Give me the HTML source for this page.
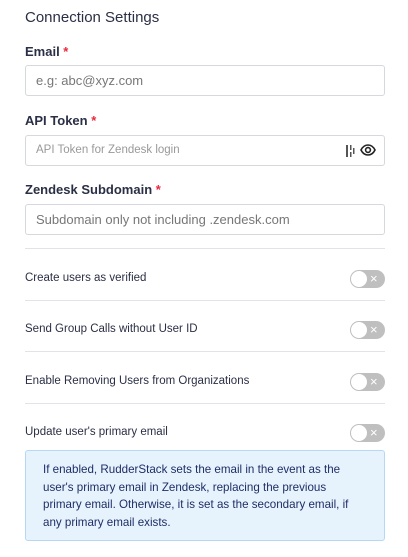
<!DOCTYPE html>
<html><head><style>
*{margin:0;padding:0;box-sizing:border-box}
body{width:408px;height:557px;background:#fff;font-family:"Liberation Sans",sans-serif;position:relative;overflow:hidden;color:#2b2f45}
.a{position:absolute}
.t{left:25px;top:9px;font-size:15px;font-weight:500;color:#2b2f45}
.l{left:25px;font-size:13px;font-weight:bold;color:#2b2f45}
.l span{color:#e8283d}
.in{left:25px;width:360px;height:31px;border:1px solid #d6d8de;border-radius:3px;font-size:13px;color:#777;padding-left:10px;line-height:29px}
.hr{left:25px;width:360px;height:1px;background:#e2e3e6}
.r{left:25px;font-size:11.5px;color:#2b2f45}
.tg{left:350px;width:35px;height:18px;border-radius:9px;background:#bfbfbf}
.tg:before{content:"";position:absolute;left:1px;top:1px;width:16px;height:16px;border-radius:50%;background:#fff}
.tg:after{content:"×";position:absolute;left:20px;top:0;font-size:13px;line-height:17px;color:#fff}
.box{left:25px;top:450px;width:360px;height:91px;background:#e6f3fd;border:1px solid #b7d7f7;border-radius:3px;padding:10px 16px 0 17px;font-size:11.6px;line-height:17.5px;color:#1f2d66}
</style></head><body>
<div class="a t">Connection Settings</div>
<div class="a l" style="top:44px">Email <span>*</span></div>
<div class="a in" style="top:65px">e.g: abc@xyz.com</div>
<div class="a l" style="top:113px">API Token <span>*</span></div>
<div class="a in" style="top:135px;font-size:11.5px;color:#999">API Token for Zendesk login
<svg class="a" style="left:318px;top:8px" width="14" height="14" viewBox="0 0 14 14"><rect x="2" y="1" width="2" height="12" fill="#555"/><rect x="6" y="1" width="1.5" height="5" fill="#555"/><rect x="6" y="8" width="1.5" height="5" fill="#555"/><rect x="9" y="4" width="1.5" height="6" fill="#555"/></svg>
<svg class="a" style="left:334px;top:7px" width="16" height="14" viewBox="0 0 16 14"><path d="M1 7C3 3 6 2 8 2s5 1 7 5c-2 4-5 5-7 5S3 11 1 7z" fill="none" stroke="#222" stroke-width="1.6"/><circle cx="8" cy="7" r="2.4" fill="none" stroke="#222" stroke-width="1.6"/></svg>
</div>
<div class="a l" style="top:182px">Zendesk Subdomain <span>*</span></div>
<div class="a in" style="top:204px">Subdomain only not including .zendesk.com</div>
<div class="a hr" style="top:248px"></div>
<div class="a r" style="top:272px">Create users as verified</div>
<div class="a tg" style="top:270px"></div>
<div class="a hr" style="top:300px"></div>
<div class="a r" style="top:323px">Send Group Calls without User ID</div>
<div class="a tg" style="top:321px"></div>
<div class="a hr" style="top:351px"></div>
<div class="a r" style="top:375px">Enable Removing Users from Organizations</div>
<div class="a tg" style="top:373px"></div>
<div class="a hr" style="top:403px"></div>
<div class="a r" style="top:426px">Update user's primary email</div>
<div class="a tg" style="top:424px"></div>
<div class="a box">If enabled, RudderStack sets the email in the event as the user's primary email in Zendesk, replacing the previous primary email. Otherwise, it is set as the secondary email, if any primary email exists.</div>
</body></html>
